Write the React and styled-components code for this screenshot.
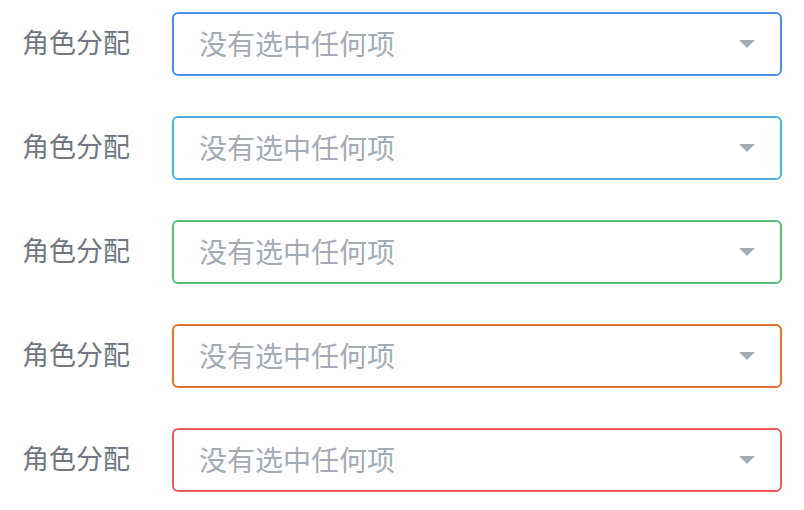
import React from 'react';
import styled, { createGlobalStyle } from 'styled-components';

const GlobalStyle = createGlobalStyle`
  body {
    margin: 0;
    background: #fff;
    font-family: "Noto Sans CJK SC", "Noto Sans", sans-serif;
  }
`;

const Page = styled.div`
  display: flex;
  flex-direction: column;
  gap: 40px;
  padding: 12px 22px 0 22px;
`;

const Row = styled.div`
  display: flex;
  align-items: center;
`;

const Label = styled.label`
  width: 150px;
  flex-shrink: 0;
  font-size: 27px;
  color: #6f7880;
  line-height: 1;
  margin-bottom: 5px;
`;

const Select = styled.div`
  flex: 1;
  height: 64px;
  box-sizing: border-box;
  border: 2px solid ${({ color }) => color};
  border-radius: 6px;
  display: flex;
  align-items: center;
  justify-content: space-between;
  padding: 0 25px 3px 25px;
`;

const Placeholder = styled.span`
  font-size: 28px;
  color: #a3acb5;
  line-height: 1;
`;

const Caret = styled.span`
  width: 0;
  height: 0;
  border-left: 8px solid transparent;
  border-right: 8px solid transparent;
  border-top: 8px solid #a3acb4;
  margin-top: 2px;
`;

const colors = ['#4f8ee8', '#4cb2d6', '#5cbf78', '#df722f', '#ec5a5c'];

const App = () => (
  <>
    <GlobalStyle />
    <Page>
      {colors.map((c, i) => (
        <Row key={i}>
          <Label>角色分配</Label>
          <Select color={c}>
            <Placeholder>没有选中任何项</Placeholder>
            <Caret />
          </Select>
        </Row>
      ))}
    </Page>
  </>
);

export default App;
